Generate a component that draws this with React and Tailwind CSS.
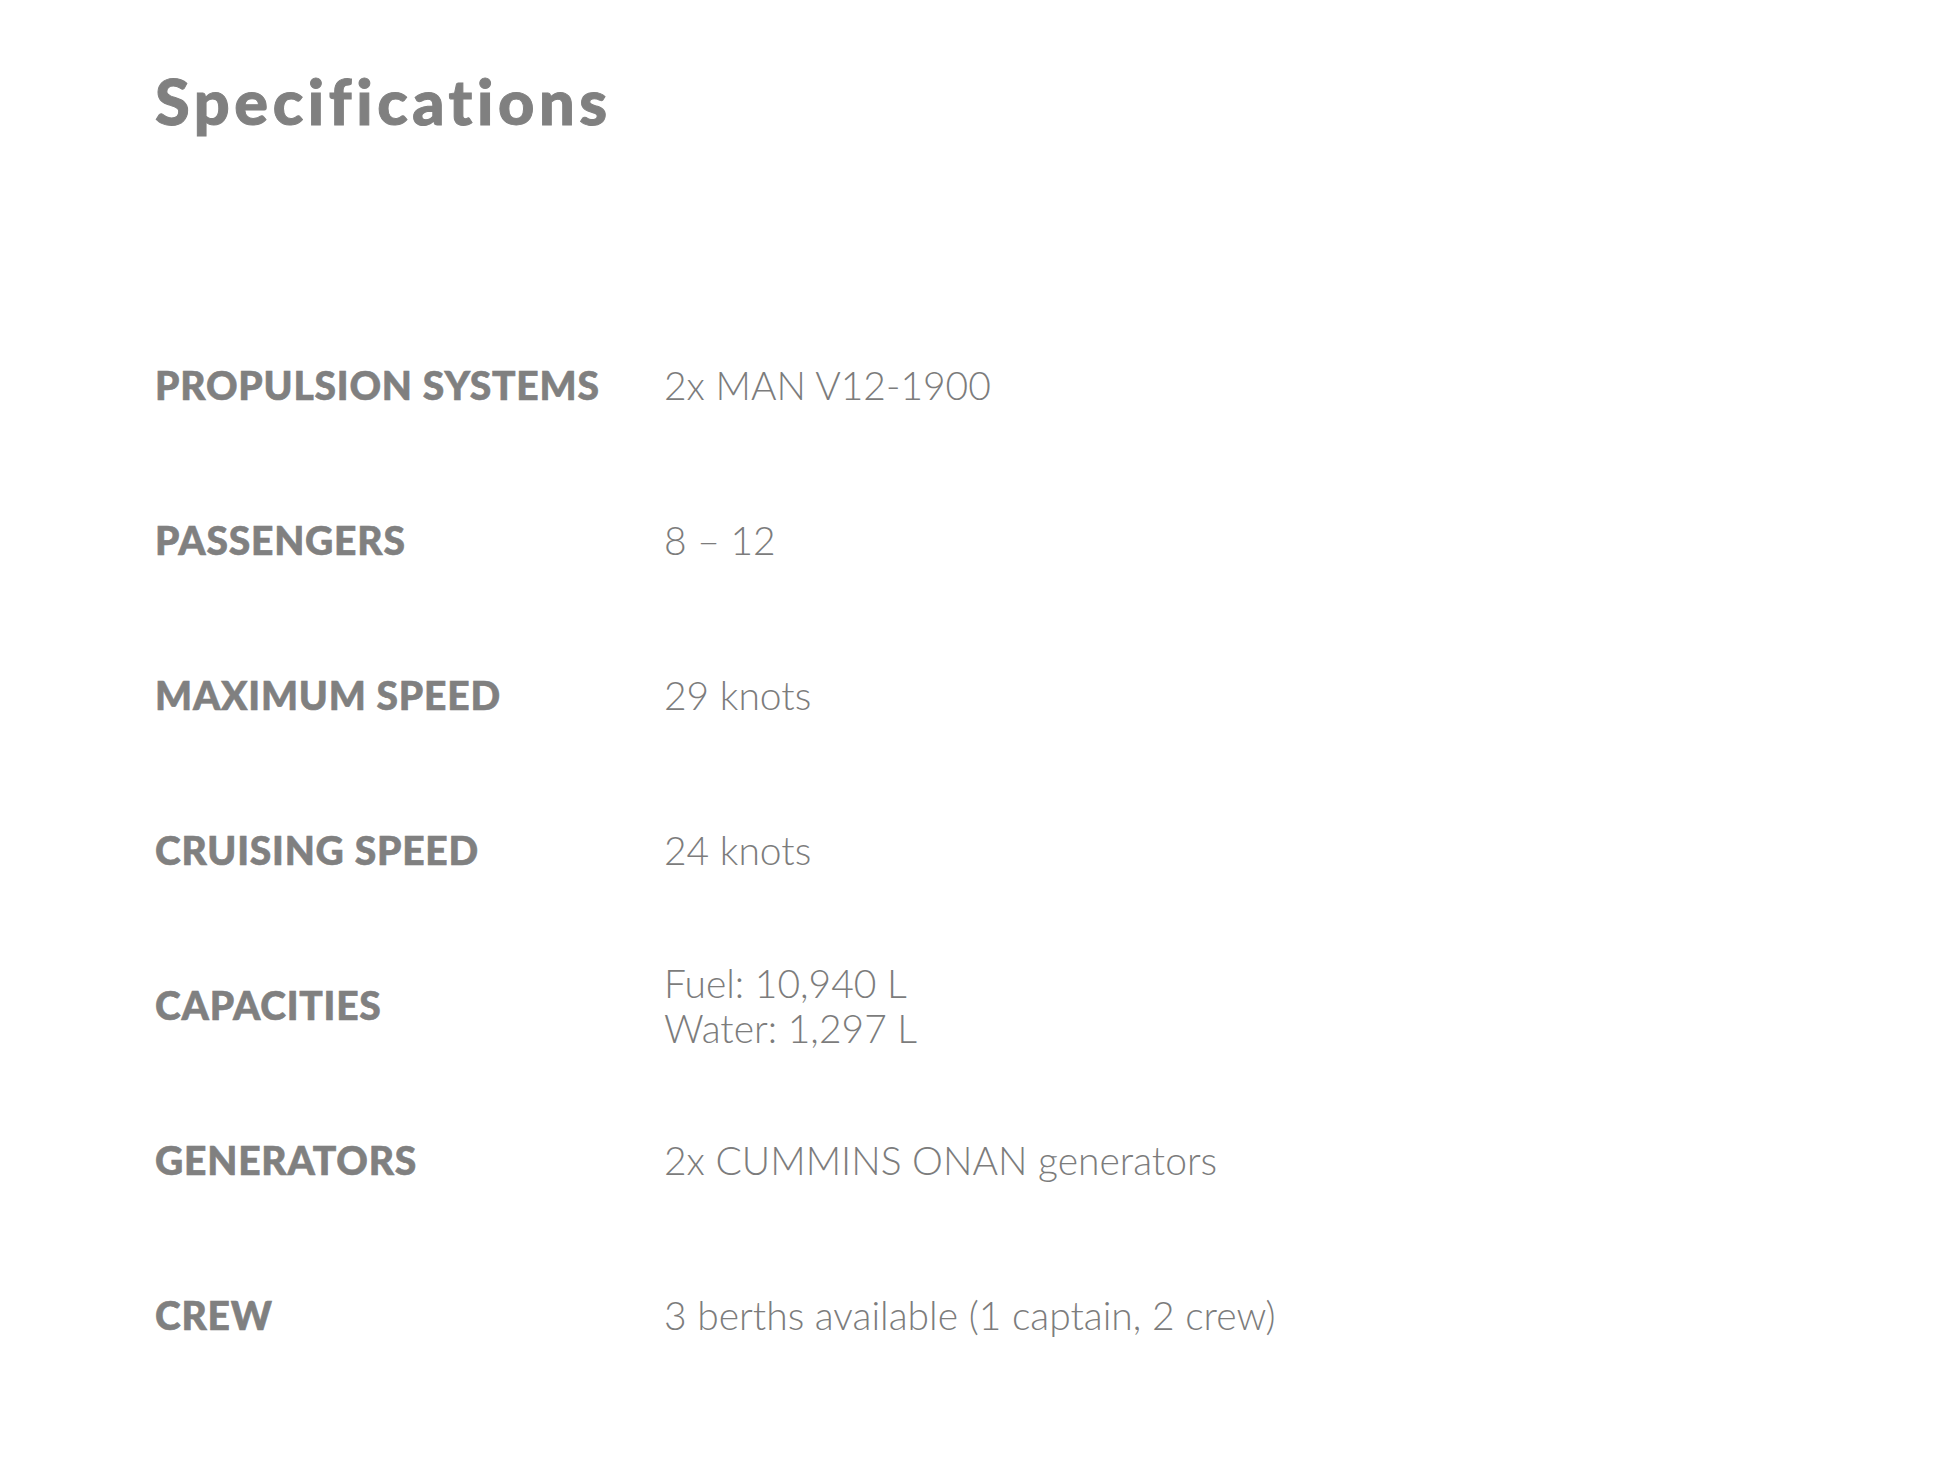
const SPECS = [
  { label: 'PROPULSION SYSTEMS', value: ['2x MAN V12-1900'] },
  { label: 'PASSENGERS', value: ['8 – 12'] },
  { label: 'MAXIMUM SPEED', value: ['29 knots'] },
  { label: 'CRUISING SPEED', value: ['24 knots'] },
  { label: 'CAPACITIES', value: ['Fuel: 10,940 L', 'Water: 1,297 L'] },
  { label: 'GENERATORS', value: ['2x CUMMINS ONAN generators'] },
  { label: 'CREW', value: ['3 berths available (1 captain, 2 crew)'] },
]

// Bảng thông số: tiêu đề lớn, rồi từng dòng nhãn đậm + giá trị mảnh.
export default function App() {
  return (
    <div className="min-h-screen bg-white pl-[155px] pt-[69px] font-['Lato','Open_Sans',sans-serif] text-[#808080] [font-variant-ligatures:none]">
      <h1 className="m-0 text-[63px] font-black leading-none tracking-[0.073em] [-webkit-text-stroke:1px_#808080]">
        Specifications
      </h1>

      <div className="mt-[176px]">
        {SPECS.map((s) => (
          <div key={s.label} className="flex h-[155px] items-center">
            <div className="w-[509px] shrink-0 text-[39px] font-black leading-none tracking-[0.02em] [-webkit-text-stroke:0.6px_#808080]">
              {s.label}
            </div>
            <div className="text-[39px] font-light leading-[45px] text-[#7c7c7c]">
              {s.value.map((line) => (
                <div key={line}>{line}</div>
              ))}
            </div>
          </div>
        ))}
      </div>
    </div>
  )
}
